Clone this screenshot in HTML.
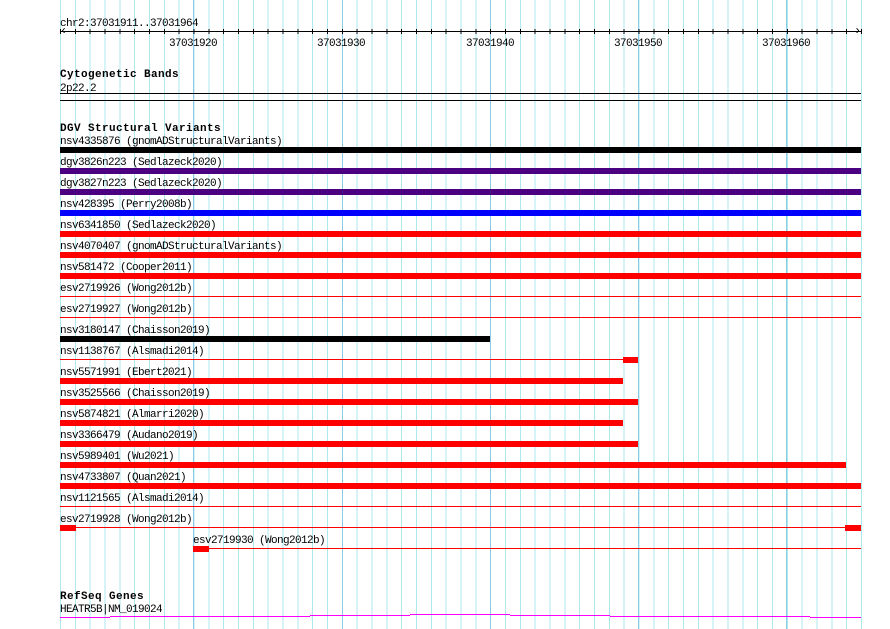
<!DOCTYPE html>
<html><head><style>
body{margin:0;width:890px;height:629px;background:#fff;position:relative;overflow:hidden;font-family:"Liberation Mono",monospace;font-size:11px;letter-spacing:-0.6px;color:#000}
div{position:absolute}
.t{line-height:12px;white-space:pre;margin-top:3px}
.b{font-weight:bold;letter-spacing:0.4px;font-size:11px;margin-top:2px}
.grid{left:60px;top:0;width:802px;height:629px;background:repeating-linear-gradient(to right,#aee8ef 0 1px,transparent 1px 14.833px)}
.dk{top:0;width:1px;height:629px;background:#8ccbe6}
.bar{height:6px}
.thin{height:1px;background:#f00}
</style></head><body>
<div class="grid"></div>
<div class="dk" style="left:193px"></div><div class="dk" style="left:342px"></div><div class="dk" style="left:490px"></div><div class="dk" style="left:638px"></div><div class="dk" style="left:786px"></div>

<div class="t" style="left:60px;top:15px">chr2:37031911..37031964</div>
<div style="left:60px;top:31px;width:801px;height:1px;background:#000"></div>
<div style="left:60px;top:29px;width:802px;height:5px;background:repeating-linear-gradient(to right,#000 0 1px,transparent 1px 14.833px)"></div>
<div class="t" style="left:60px;top:22px;font-size:12px">&lsaquo;</div>
<div class="t" style="left:854px;top:22px;font-size:12px">&rsaquo;</div>
<div class="t" style="left:169px;top:35px">37031920</div>
<div class="t" style="left:317px;top:35px">37031930</div>
<div class="t" style="left:466px;top:35px">37031940</div>
<div class="t" style="left:614px;top:35px">37031950</div>
<div class="t" style="left:762px;top:35px">37031960</div>

<div class="t b" style="left:60px;top:67px">Cytogenetic Bands</div>
<div class="t" style="left:60px;top:80px">2p22.2</div>
<div style="left:60px;top:93px;width:801px;height:1px;background:#000"></div>
<div style="left:60px;top:100px;width:801px;height:1px;background:#000"></div>

<div class="t b" style="left:60px;top:121px">DGV Structural Variants</div>

<div class="t" style="left:60px;top:133px">nsv4335876 (gnomADStructuralVariants)</div>
<div class="bar" style="left:60px;top:147px;width:801px;background:#000"></div>
<div class="t" style="left:60px;top:154px">dgv3826n223 (Sedlazeck2020)</div>
<div class="bar" style="left:60px;top:168px;width:801px;background:#4b0082"></div>
<div class="t" style="left:60px;top:175px">dgv3827n223 (Sedlazeck2020)</div>
<div class="bar" style="left:60px;top:189px;width:801px;background:#4b0082"></div>
<div class="t" style="left:60px;top:196px">nsv428395 (Perry2008b)</div>
<div class="bar" style="left:60px;top:210px;width:801px;background:#00f"></div>
<div class="t" style="left:60px;top:217px">nsv6341850 (Sedlazeck2020)</div>
<div class="bar" style="left:60px;top:231px;width:801px;background:#f00"></div>
<div class="t" style="left:60px;top:238px">nsv4070407 (gnomADStructuralVariants)</div>
<div class="bar" style="left:60px;top:252px;width:801px;background:#f00"></div>
<div class="t" style="left:60px;top:259px">nsv581472 (Cooper2011)</div>
<div class="bar" style="left:60px;top:273px;width:801px;background:#f00"></div>
<div class="t" style="left:60px;top:280px">esv2719926 (Wong2012b)</div>
<div class="thin" style="left:60px;top:296px;width:801px"></div>
<div class="t" style="left:60px;top:301px">esv2719927 (Wong2012b)</div>
<div class="thin" style="left:60px;top:317px;width:801px"></div>
<div class="t" style="left:60px;top:322px">nsv3180147 (Chaisson2019)</div>
<div class="bar" style="left:60px;top:336px;width:430px;background:#000"></div>
<div class="t" style="left:60px;top:343px">nsv1138767 (Alsmadi2014)</div>
<div class="thin" style="left:60px;top:359px;width:563px"></div>
<div class="bar" style="left:623px;top:357px;width:15px;background:#f00"></div>
<div class="t" style="left:60px;top:364px">nsv5571991 (Ebert2021)</div>
<div class="bar" style="left:60px;top:378px;width:563px;background:#f00"></div>
<div class="t" style="left:60px;top:385px">nsv3525566 (Chaisson2019)</div>
<div class="bar" style="left:60px;top:399px;width:578px;background:#f00"></div>
<div class="t" style="left:60px;top:406px">nsv5874821 (Almarri2020)</div>
<div class="bar" style="left:60px;top:420px;width:563px;background:#f00"></div>
<div class="t" style="left:60px;top:427px">nsv3366479 (Audano2019)</div>
<div class="bar" style="left:60px;top:441px;width:578px;background:#f00"></div>
<div class="t" style="left:60px;top:448px">nsv5989401 (Wu2021)</div>
<div class="bar" style="left:60px;top:462px;width:786px;background:#f00"></div>
<div class="t" style="left:60px;top:469px">nsv4733807 (Quan2021)</div>
<div class="bar" style="left:60px;top:483px;width:801px;background:#f00"></div>
<div class="t" style="left:60px;top:490px">nsv1121565 (Alsmadi2014)</div>
<div class="thin" style="left:60px;top:506px;width:801px"></div>
<div class="t" style="left:60px;top:511px">esv2719928 (Wong2012b)</div>
<div class="thin" style="left:60px;top:527px;width:801px"></div>
<div class="bar" style="left:60px;top:525px;width:16px;background:#f00"></div>
<div class="bar" style="left:845px;top:525px;width:16px;background:#f00"></div>
<div class="t" style="left:193px;top:532px">esv2719930 (Wong2012b)</div>
<div class="thin" style="left:193px;top:548px;width:668px"></div>
<div class="bar" style="left:193px;top:546px;width:16px;background:#f00"></div>

<div class="t b" style="left:60px;top:589px">RefSeq Genes</div>
<div class="t" style="left:60px;top:601px">HEATR5B|NM_019024</div>
<div style="left:60px;top:617px;width:50px;height:1px;background:#f0f"></div>
<div style="left:110px;top:616px;width:100px;height:1px;background:#f0f"></div>
<div style="left:210px;top:616px;width:100px;height:1px;background:#f0f"></div>
<div style="left:310px;top:615px;width:100px;height:1px;background:#f0f"></div>
<div style="left:410px;top:614px;width:100px;height:1px;background:#f0f"></div>
<div style="left:510px;top:615px;width:100px;height:1px;background:#f0f"></div>
<div style="left:610px;top:616px;width:100px;height:1px;background:#f0f"></div>
<div style="left:710px;top:616px;width:100px;height:1px;background:#f0f"></div>
<div style="left:810px;top:617px;width:51px;height:1px;background:#f0f"></div>
</body></html>
